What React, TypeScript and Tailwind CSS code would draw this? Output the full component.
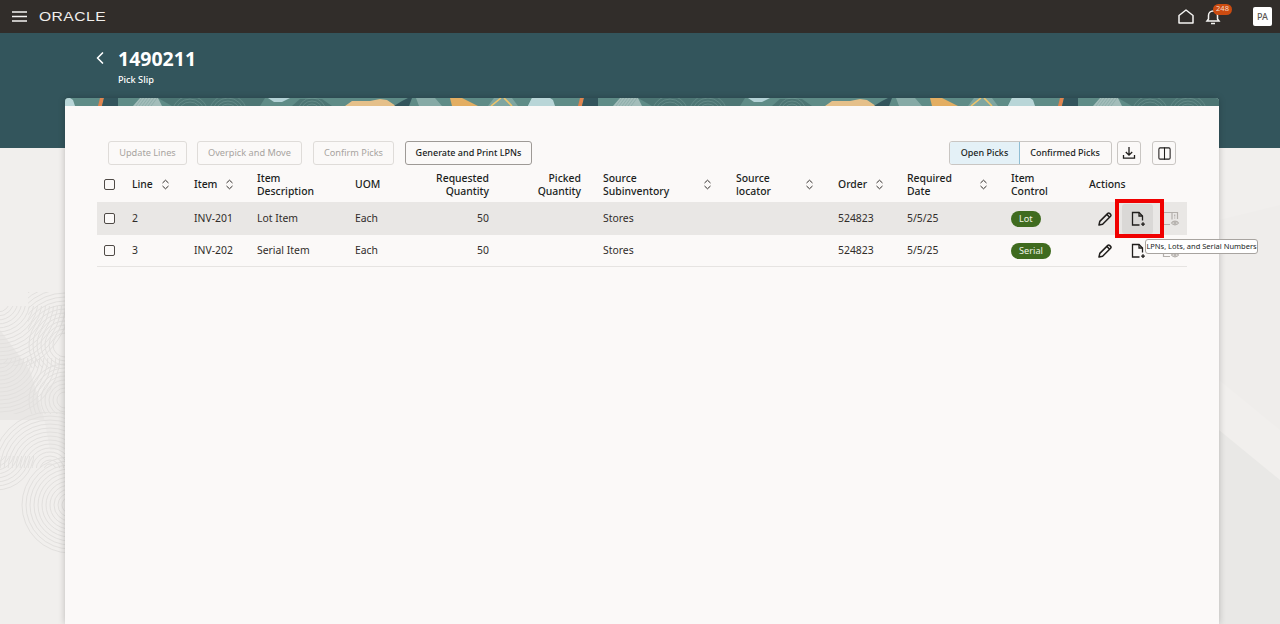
import { ChevronLeft, Columns2 } from "lucide-react";

const cols = "grid-cols-[35px_62px_63px_98px_57px_77px_92px_155px_102px_69px_104px_78px_98px]";

type Row = {
  line: string;
  item: string;
  desc: string;
  control: string;
  shaded?: boolean;
};

const rows: Row[] = [
  { line: "2", item: "INV-201", desc: "Lot Item", control: "Lot", shaded: true },
  { line: "3", item: "INV-202", desc: "Serial Item", control: "Serial" },
];

function Sort() {
  return (
    <svg width="9" height="11" viewBox="0 0 9 11" fill="none" stroke="#312d2a" strokeWidth="1" className="shrink-0">
      <path d="M1.5 4 4.5 1.2 7.5 4M1.5 7 4.5 9.8 7.5 7" />
    </svg>
  );
}

function Check() {
  return <span className="block h-[11px] w-[11px] rounded-[2px] border-[1.5px] border-[#4f4a46] bg-[#fbf9f8]" />;
}

function PencilIcon() {
  return (
    <svg width="16" height="16" viewBox="0 0 16 16" fill="none" stroke="#201e1c" strokeWidth="1.5" strokeLinejoin="round">
      <path d="M2 14l.8-3.6 8-8a1.3 1.3 0 0 1 1.8 0l1 1a1.3 1.3 0 0 1 0 1.8l-8 8z" />
      <path d="M9.8 3.4l2.8 2.8" />
    </svg>
  );
}

function DocPlus() {
  return (
    <svg width="16" height="16" viewBox="0 0 16 16" fill="none" stroke="#201e1c" strokeWidth="1.3">
      <path d="M9.5 14H2.5V1.5h6.5l3.5 3.5v4.5" />
      <path d="M9 1.5V5h3.5" />
      <path d="M13 11.2v3.8M11.1 13.1h3.8" strokeWidth="1.4" />
    </svg>
  );
}

function DocEye() {
  return (
    <svg width="18" height="16" viewBox="0 0 18 16" fill="none" stroke="#b3afab" strokeWidth="1.2">
      <path d="M8 13.5H1.5V1.5h14V8" />
      <path d="M10 1.5v7" />
      <path d="M12.7 3.5v2M12.7 6.4v1" />
      <path d="M9.5 12c1.6-2.4 5.4-2.4 7 0-1.6 2.4-5.4 2.4-7 0z" />
      <circle cx="13" cy="12" r="1" />
    </svg>
  );
}

function Arcs({ cx, cy, from = 12, to = 76 }: { cx: number; cy: number; from?: number; to?: number }) {
  const radii: number[] = [];
  for (let r = from; r < to; r += 4) radii.push(r);
  return (
    <g>
      {radii.map((r) => (
        <circle key={r} cx={cx} cy={cy} r={r} />
      ))}
    </g>
  );
}

function PageArt() {
  return (
    <svg width="1280" height="476" viewBox="0 148 1280 476" className="absolute left-0 top-[148px]" fill="none">
      <polygon points="0,148 1280,148 1280,624 0,624" fill="#f1efed" />
      <polygon points="1219,430 1280,480 1280,624 1219,624" fill="#e9e8e6" />
      <polygon points="1219,220 1280,205 1280,430 1219,380" fill="#efedeb" />
      <polygon points="0,330 30,370 45,420 0,420" fill="#e9e7e5" />
      <polygon points="40,395 65,370 65,450 50,450" fill="#edebe9" />
      <g stroke="#e2e0de" strokeWidth="1">
        <clipPath id="a1"><rect x="0" y="306" width="65" height="60" /></clipPath>
        <g clipPath="url(#a1)"><Arcs cx={-2} cy={300} /></g>
        <clipPath id="a2"><rect x="28" y="292" width="37" height="76" /></clipPath>
        <g clipPath="url(#a2)"><Arcs cx={65} cy={345} /></g>
        <clipPath id="a3"><rect x="0" y="358" width="65" height="56" /></clipPath>
        <g clipPath="url(#a3)"><Arcs cx={0} cy={356} from={8} to={62} /><Arcs cx={65} cy={400} from={8} to={40} /></g>
        <clipPath id="a4"><rect x="0" y="412" width="65" height="56" /></clipPath>
        <g clipPath="url(#a4)"><Arcs cx={50} cy={470} from={6} to={60} /></g>
        <clipPath id="a5"><rect x="0" y="456" width="65" height="100" /></clipPath>
        <g clipPath="url(#a5)"><Arcs cx={-4} cy={452} from={6} to={40} /><Arcs cx={70} cy={505} from={8} to={50} /></g>
      </g>
    </svg>
  );
}

function BannerTile() {
  return (
    <g>
      <rect x="0" y="0" width="480" height="8" fill="#5f8c87" />
      <polygon points="-12,8 -8,0 10,0 13,2 15,8" fill="#b9d6d8" />
      <polygon points="38,8 40,0 44,0 42,8" fill="#e0854f" />
      <polygon points="44,0 58,0 58,8 42,8" fill="#33555c" />
      <polygon points="73,8 80,0 98,0 102,8" fill="#a3bdba" />
      <polygon points="98,0 205,0 200,8 112,8" fill="#4d7674" />
      <polygon points="208,0 230,0 222,4 214,4" fill="#b3d2d6" />
      <polygon points="232,8 240,1 262,1 272,8" fill="#4d7674" />
      <path d="M285 8 292 3 310 3 320 1 327 2 336 8z" fill="#e5c08a" />
      <polygon points="334,8 342,3 348,0 352,0 349,8" fill="#33555c" />
      <polygon points="356,0 375,0 382,8 359,8" fill="#86aaa6" />
      <polygon points="390,0 402,0 418,8 392,8" fill="#e3ae62" />
      <polygon points="428,8 434,0 452,0 458,8" fill="#7fa6a1" />
      <path d="M431 8 441 0M444 0 452 8" stroke="#eec36a" strokeWidth="1.6" />
      <polygon points="472,0 480,0 480,8 468,8" fill="#b9d6d8" />
      <g stroke="#7a9f9b" strokeWidth="0.5" fill="none">
        <path d="M76 8 82 0M79 8 85 0M82 8 88 0M85 8 91 0M88 8 94 0M91 8 97 0" />
        <circle cx="130" cy="16" r="12" />
        <circle cx="130" cy="16" r="15" />
        <circle cx="130" cy="16" r="18" />
        <circle cx="168" cy="16" r="10" />
        <circle cx="168" cy="16" r="13" />
        <circle cx="168" cy="16" r="16" />
        <circle cx="168" cy="16" r="19" />
        <circle cx="252" cy="14" r="8" />
        <circle cx="252" cy="14" r="11" />
        <circle cx="252" cy="14" r="14" />
      </g>
    </g>
  );
}

function Banner() {
  return (
    <svg width="1154" height="8" viewBox="0 0 1154 8" className="block rounded-t-[4px]">
      <g transform="translate(-5 0)"><BannerTile /></g>
      <g transform="translate(475 0)"><BannerTile /></g>
      <g transform="translate(955 0)"><BannerTile /></g>
    </svg>
  );
}

function Header() {
  return (
    <header className="flex h-[33px] items-center bg-[#312d2a] text-white">
      <svg width="15" height="11" viewBox="0 0 15 11" stroke="#f5f4f2" strokeWidth="1.3" className="ml-[12px]">
        <path d="M0 1h15M0 5.5h15M0 10h15" />
      </svg>
      <span className="ml-[12px] w-[70px] origin-left scale-x-[1.2] text-[13px] leading-none tracking-[0.4px] font-['Liberation_Sans',sans-serif] text-[#f1efed]">
        ORACLE
      </span>
      <div className="ml-auto flex items-center">
        <svg width="16" height="15" viewBox="0 0 16 15" fill="none" stroke="#f5f4f2" strokeWidth="1.5" strokeLinejoin="round">
          <path d="M1 13.9V6.5L8 1l7 5.5v7.4z" />
        </svg>
        <div className="relative ml-[11px] mr-[16px] w-[32px]">
          <svg width="16" height="16" viewBox="0 0 16 16" fill="none" stroke="#f5f4f2" strokeWidth="1.5">
            <path d="M2 12h12l-1.5-2V6.5a4.5 4.5 0 0 0-9 0V10z" />
            <path d="M6 14.5h4" />
          </svg>
          <span className="absolute left-[8px] top-[-5px] flex h-[11px] w-[19px] items-center justify-center rounded-full bg-[#cb4b10] text-[7.5px] leading-none text-[#f3d9c8]">
            248
          </span>
        </div>
        <span className="mr-[8px] flex h-[19px] w-[19px] items-center justify-center rounded-[2px] bg-white text-[9px] font-medium text-[#5b5652]">
          PA
        </span>
      </div>
    </header>
  );
}

function Toolbar() {
  const disabled = "h-[24px] rounded-[3px] border border-[#dfdcd9] text-[9.2px] text-[#a8a4a0]";
  return (
    <div className="flex h-[24px] items-center pl-[43px] pr-[43px]">
      <button type="button" className={`${disabled} w-[79px]`}>Update Lines</button>
      <button type="button" className={`${disabled} ml-[10px] w-[105px]`}>Overpick and Move</button>
      <button type="button" className={`${disabled} ml-[11px] w-[81px]`}>Confirm Picks</button>
      <button
        type="button"
        className="ml-[11px] h-[24px] w-[127px] rounded-[3px] border border-[#9e9a96] text-[9px] font-medium text-[#201e1c]"
      >
        Generate and Print LPNs
      </button>
      <div className="ml-auto flex h-[24px] w-[163px] overflow-hidden rounded-[3px] border border-[#c9c6c3] text-[9px] font-medium text-[#201e1c]">
        <span className="flex w-[71px] items-center justify-center border border-[#8fbdd3] bg-[#e4f1f7] -m-px">Open Picks</span>
        <span className="flex flex-1 items-center justify-center">Confirmed Picks</span>
      </div>
      <button
        type="button"
        className="ml-[5px] flex h-[24px] w-[24px] items-center justify-center rounded-[3px] border border-[#c9c6c3]"
      >
        <svg width="14" height="14" viewBox="0 0 14 14" fill="none" stroke="#201e1c" strokeWidth="1.3">
          <path d="M7 1v8M3.8 6 7 9.2 10.2 6M1.5 9v3.2h11V9" />
        </svg>
      </button>
      <button
        type="button"
        className="ml-[11px] flex h-[24px] w-[24px] items-center justify-center rounded-[3px] border border-[#c9c6c3]"
      >
        <Columns2 size={15} strokeWidth={1.7} color="#201e1c" />
      </button>
    </div>
  );
}

function Table() {
  return (
    <div className="mx-[32px] mt-[2px] text-[10.4px] leading-[13px] text-[#312d2a]">
      <div className={`grid ${cols} h-[35px] items-center font-medium text-[#201e1c]`}>
        <span className="pl-[7px]"><Check /></span>
        <span className="flex items-center gap-[8px]">Line <Sort /></span>
        <span className="flex items-center gap-[8px]">Item <Sort /></span>
        <span>Item<br />Description</span>
        <span>UOM</span>
        <span className="text-right">Requested<br />Quantity</span>
        <span className="text-right">Picked<br />Quantity</span>
        <span className="flex items-center justify-between pl-[22px] pr-[24px]"><span>Source<br />Subinventory</span><Sort /></span>
        <span className="flex items-center justify-between pr-[24px]"><span>Source<br />locator</span><Sort /></span>
        <span className="flex items-center gap-[8px]">Order <Sort /></span>
        <span className="flex items-center justify-between pr-[23px]"><span>Required<br />Date</span><Sort /></span>
        <span>Item<br />Control</span>
        <span>Actions</span>
      </div>
      {rows.map((r) => (
        <div
          key={r.line}
          className={`grid ${cols} items-center ${r.shaded ? "h-[33px] bg-[#e9e7e5]" : "h-[32px] border-b border-[#e6e4e2]"}`}
        >
          <span className="pl-[7px]"><Check /></span>
          <span>{r.line}</span>
          <span>{r.item}</span>
          <span>{r.desc}</span>
          <span>Each</span>
          <span className="text-right">50</span>
          <span />
          <span className="pl-[22px]">Stores</span>
          <span />
          <span>524823</span>
          <span>5/5/25</span>
          <span>
            <span className="inline-flex h-[16px] items-center rounded-full bg-[#3f6b1f] px-[8px] text-[9.2px] text-[#eef3e6]">
              {r.control}
            </span>
          </span>
          <span className="flex items-center gap-[2px]">
            <span className="flex h-[30px] w-[31px] items-center justify-center">
              <PencilIcon />
            </span>
            <span className={`flex h-[30px] w-[31px] items-center justify-center rounded-[3px] ${r.shaded ? "bg-[#dad8d6]" : ""}`}>
              <DocPlus />
            </span>
            <span className="flex h-[30px] w-[31px] items-center justify-center">
              <DocEye />
            </span>
          </span>
        </div>
      ))}
    </div>
  );
}

export default function App() {
  return (
    <div className="relative h-[624px] w-[1280px] overflow-hidden bg-[#f1efed] font-['Noto_Sans',sans-serif]">
      <PageArt />
      <div className="relative">
        <Header />
        <div className="h-[115px] bg-[#33555c] text-white">
          <div className="flex pl-[90px] pt-[15px]">
            <ChevronLeft size={20} strokeWidth={2} />
            <div className="ml-[8px]">
              <h1 className="text-[19.5px] leading-[22px] font-bold">1490211</h1>
              <p className="mt-[4px] text-[9.2px] leading-[12px] font-medium">Pick Slip</p>
            </div>
          </div>
        </div>
        <main className="relative mx-[65px] -mt-[50px] h-[526px] w-[1154px] rounded-t-[4px] bg-[#fbf9f8] shadow-[0_0_7px_rgba(0,0,0,0.22)]">
          <Banner />
          <div className="pt-[35px]">
            <Toolbar />
            <Table />
          </div>
        </main>
      </div>
      {/* annotation box and tooltip sit on top of the table */}
      <div className="absolute left-[1115px] top-[199px] h-[39px] w-[49px] border-[4px] border-[#f00000]" />
      <div className="absolute left-[1145px] top-[239px] flex h-[15px] w-[113px] items-center justify-center rounded-[3px] border border-[#a8a4a0] bg-white text-[7.5px] whitespace-nowrap text-[#201e1c]">
        LPNs, Lots, and Serial Numbers
      </div>
    </div>
  );
}
